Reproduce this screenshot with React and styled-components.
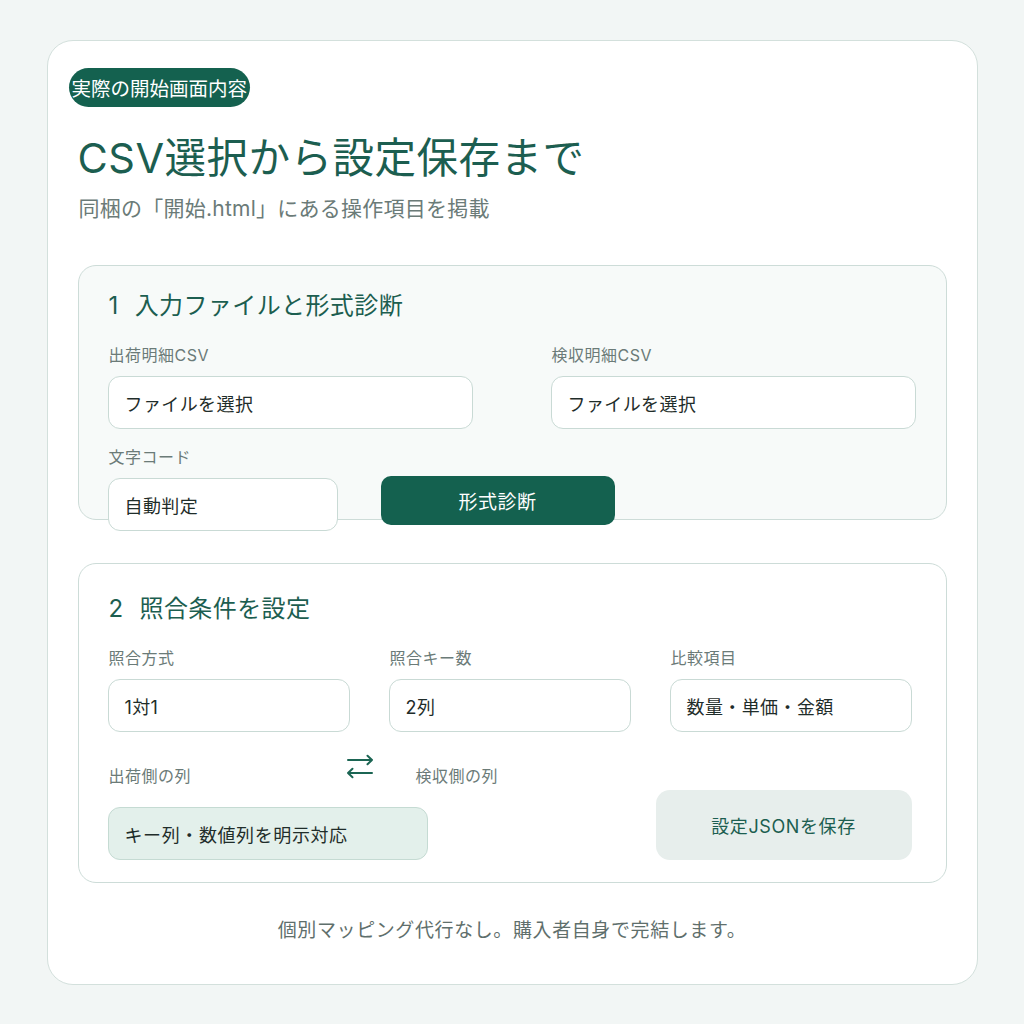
import React from 'react'
import styled, { createGlobalStyle } from 'styled-components'

const green = '#14614f'
const ink = '#1c5e50'
const line = '#cddcd8'
const muted = '#6b7b78'

const GlobalStyle = createGlobalStyle`
  body {
    margin: 0;
    background: #f2f6f5;
    font-family: Inter, "Noto Sans CJK JP", sans-serif;
  }
`

const App = () => {
  return (
    <>
      <GlobalStyle />
      <Card>
        <Badge>実際の開始画面内容</Badge>
        <Title>CSV選択から設定保存まで</Title>
        <Subtitle>同梱の「開始.html」にある操作項目を掲載</Subtitle>

        <Section tinted height={255} top={25}>
          <SectionTitle><Num>1</Num>入力ファイルと形式診断</SectionTitle>
          <TwoCols>
            <Field>
              <Label>出荷明細CSV</Label>
              <Input>ファイルを選択</Input>
            </Field>
            <Field>
              <Label>検収明細CSV</Label>
              <Input>ファイルを選択</Input>
            </Field>
          </TwoCols>
          <DiagRow>
            <Field width={230}>
              <Label>文字コード</Label>
              <Input>自動判定</Input>
            </Field>
            <PrimaryButton>形式診断</PrimaryButton>
          </DiagRow>
        </Section>

        <Section top={30} right={34}>
          <SectionTitle><Num>2</Num>照合条件を設定</SectionTitle>
          <ThreeCols>
            <Field>
              <Label>照合方式</Label>
              <Input>1対1</Input>
            </Field>
            <Field>
              <Label>照合キー数</Label>
              <Input>2列</Input>
            </Field>
            <Field>
              <Label>比較項目</Label>
              <Input>数量・単価・金額</Input>
            </Field>
          </ThreeCols>
          <MapRow>
            <MapCol>
              <MapLabels>
                <MapLabel>出荷側の列</MapLabel>
                <SwapIcon width="28" height="24" viewBox="0 0 28 24">
                  <path d="M2 5H26M21.5 0.8L26 5L21.5 9.2" />
                  <path d="M26 18H2M6.5 13.8L2 18L6.5 22.2" />
                </SwapIcon>
                <MapLabel second>検収側の列</MapLabel>
              </MapLabels>
              <MapBox>キー列・数値列を明示対応</MapBox>
            </MapCol>
            <SaveButton>設定JSONを保存</SaveButton>
          </MapRow>
        </Section>

        <Footer>個別マッピング代行なし。購入者自身で完結します。</Footer>
      </Card>
    </>
  )
}

export default App

const Card = styled.div`
  box-sizing: border-box;
  width: 931px;
  margin: 40px auto 0;
  padding: 27px 30px 40px;
  background: #ffffff;
  border: 1px solid #d3e0dc;
  border-radius: 26px;
  display: flex;
  flex-direction: column;
`

const Badge = styled.div`
  align-self: flex-start;
  display: inline-flex;
  align-items: center;
  height: 39px;
  margin-left: -9px;
  padding: 0 3px;
  border-radius: 20px;
  background: ${green};
  color: #ffffff;
  font-size: 19.5px;
  white-space: nowrap;
`

const Title = styled.h1`
  margin: 26px 0 0;
  font-size: 41.5px;
  line-height: 50px;
  letter-spacing: 0.5px;
  font-weight: 400;
  color: ${ink};
`

const Subtitle = styled.p`
  margin: 13px 0 0 1px;
  font-size: 21px;
  line-height: 26px;
  letter-spacing: 0.25px;
  color: ${muted};
`

const Section = styled.section`
  box-sizing: border-box;
  height: ${p => (p.height ? `${p.height}px` : 'auto')};
  margin-top: 43px;
  padding: ${p => p.top}px ${p => p.right || 30}px 22px 29px;
  background: ${p => (p.tinted ? '#f7faf9' : '#ffffff')};
  border: 1px solid ${line};
  border-radius: 18px;
`

const SectionTitle = styled.h2`
  display: flex;
  margin: 0 0 23px 1px;
  font-size: 24px;
  line-height: 30px;
  letter-spacing: 0.4px;
  font-weight: 400;
  color: ${ink};
`

const Num = styled.span`
  margin-right: 16px;
`

const TwoCols = styled.div`
  display: grid;
  grid-template-columns: 1fr 1fr;
  column-gap: 78px;
`

const ThreeCols = styled.div`
  display: grid;
  grid-template-columns: repeat(3, 1fr);
  column-gap: 39px;
`

const Field = styled.div`
  display: flex;
  flex-direction: column;
  width: ${p => (p.width ? `${p.width}px` : 'auto')};
`

const Label = styled.div`
  margin: 0 0 10px 1px;
  font-size: 16px;
  line-height: 22px;
  letter-spacing: 0.5px;
  color: ${muted};
`

const Input = styled.div`
  box-sizing: border-box;
  height: 53px;
  display: flex;
  align-items: center;
  padding: 0 16px;
  background: #ffffff;
  border: 1px solid #c9dad5;
  border-radius: 12px;
  font-size: 18px;
  letter-spacing: 0.4px;
  color: #1f2d2a;
`

const DiagRow = styled.div`
  display: flex;
  align-items: flex-end;
  gap: 43px;
  margin-top: 17px;
`

const PrimaryButton = styled.div`
  box-sizing: border-box;
  width: 234px;
  height: 49px;
  margin-bottom: 6px;
  display: flex;
  align-items: center;
  justify-content: center;
  background: ${green};
  border-radius: 10px;
  color: #ffffff;
  font-size: 19px;
  letter-spacing: 0.5px;
`

const MapRow = styled.div`
  display: flex;
  justify-content: space-between;
  align-items: flex-end;
  margin-top: 23px;
`

const MapCol = styled.div`
  width: 320px;
  display: flex;
  flex-direction: column;
`

const MapLabels = styled.div`
  display: flex;
  align-items: flex-end;
  margin-bottom: 20px;
`

const MapLabel = styled.div`
  width: ${p => (p.second ? 'auto' : '237px')};
  flex: none;
  margin-left: ${p => (p.second ? '42px' : '1px')};
  font-size: 16px;
  line-height: 22px;
  letter-spacing: 0.5px;
  color: ${muted};
  white-space: nowrap;
`

const SwapIcon = styled.svg`
  flex: none;
  margin-bottom: 8px;
  overflow: visible;
  fill: none;
  stroke: #1b6553;
  stroke-width: 2;
  stroke-linecap: round;
  stroke-linejoin: round;
`

const MapBox = styled.div`
  box-sizing: border-box;
  height: 53px;
  display: flex;
  align-items: center;
  padding: 0 16px;
  background: #e3f0eb;
  border: 1px solid #c5dbd3;
  border-radius: 12px;
  font-size: 18px;
  letter-spacing: 0.6px;
  color: #1f2d2a;
`

const SaveButton = styled.div`
  width: 256px;
  height: 70px;
  display: flex;
  align-items: center;
  justify-content: center;
  background: #e7eeec;
  border-radius: 14px;
  color: ${ink};
  font-size: 18px;
  letter-spacing: 0.6px;
`

const Footer = styled.p`
  margin: 35px 0 0;
  text-align: center;
  font-size: 19px;
  line-height: 26px;
  letter-spacing: 0.6px;
  color: #5f6f6c;
`
